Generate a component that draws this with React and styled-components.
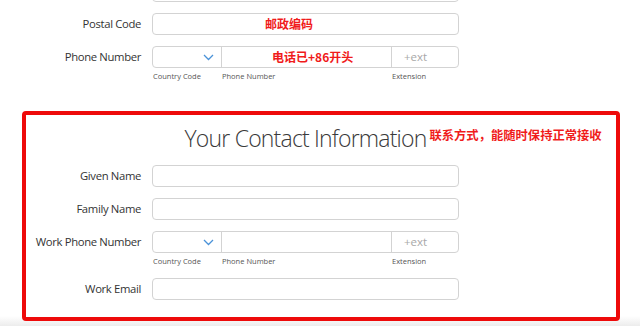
import styled, { createGlobalStyle } from 'styled-components';

const GlobalStyle = createGlobalStyle`
  html, body {
    margin: 0;
    padding: 0;
  }
  body {
    background: linear-gradient(#ffffff 316px, #ececec 326px);
    min-height: 326px;
    overflow: hidden;
    font-family: "Open Sans", "Noto Sans", sans-serif;
    color: #333333;
  }
`

const Chevron = () => (
  <svg width='11' height='7' viewBox='0 0 11 7'>
    <path d='M1 1 L5.5 5.5 L10 1' fill='none' stroke='#4a92d8' strokeWidth='1.3' />
  </svg>
)

const PhoneRow = ({ label, labelWidth, note }) => (
  <Row $labelWidth={labelWidth}>
    <Label>{label}</Label>
    <div>
      <PhoneGroup>
        <SelectBox>
          <Chevron />
        </SelectBox>
        <PhoneInput>
          {note && <Note $left={50}>{note}</Note>}
        </PhoneInput>
        <ExtInput>+ext</ExtInput>
      </PhoneGroup>
      <SubLabels>
        <span>Country Code</span>
        <span>Phone Number</span>
        <span>Extension</span>
      </SubLabels>
    </div>
  </Row>
)

const TextRow = ({ label, labelWidth, note }) => (
  <Row $labelWidth={labelWidth}>
    <Label>{label}</Label>
    <Input>
      {note && <Note $left={112}>{note}</Note>}
    </Input>
  </Row>
)

const App = () => {
  return (
    <>
      <GlobalStyle />
      <Page>
        <TopForm>
          <TextRow label='' labelWidth={141} />
          <TextRow label='Postal Code' labelWidth={141} note='邮政编码' />
          <PhoneRow label='Phone Number' labelWidth={141} note='电话已+86开头' />
        </TopForm>
        <ContactBox>
          <HeadingRow>
            <Heading>
              Your Contact Information
              <HeadingNote>联系方式，能随时保持正常接收</HeadingNote>
            </Heading>
          </HeadingRow>
          <TextRow label='Given Name' labelWidth={115} />
          <TextRow label='Family Name' labelWidth={115} />
          <PhoneRow label='Work Phone Number' labelWidth={115} />
          <TextRow label='Work Email' labelWidth={115} />
        </ContactBox>
      </Page>
    </>
  )
}

export default App

const Page = styled.div`
  width: 640px;
  height: 326px;
  overflow: hidden;
`

const TopForm = styled.div`
  margin-top: -20px;
  display: flex;
  flex-direction: column;
  gap: 11px;
`

const Row = styled.div`
  display: grid;
  grid-template-columns: ${props => props.$labelWidth}px 307px;
  column-gap: 11px;
  align-items: start;
`

const Label = styled.div`
  height: 22px;
  line-height: 22px;
  text-align: right;
  font-size: 11.3px;
  letter-spacing: -0.35px;
  color: #333333;
  white-space: nowrap;
`

const Input = styled.div`
  position: relative;
  box-sizing: border-box;
  height: 22px;
  border: 1px solid #d3d3d3;
  border-radius: 4px;
  background: #ffffff;
`

const Note = styled.span`
  position: absolute;
  left: ${props => props.$left}px;
  top: 0;
  line-height: 20px;
  font-family: "Noto Sans CJK SC", sans-serif;
  font-weight: 700;
  font-size: 12px;
  color: #f01b1b;
  white-space: nowrap;
`

const PhoneGroup = styled.div`
  display: grid;
  grid-template-columns: 69px 170px 68px;
  height: 22px;
  box-sizing: border-box;
  border: 1px solid #d3d3d3;
  border-radius: 4px;
  background: #ffffff;
`

const SelectBox = styled.div`
  display: flex;
  align-items: center;
  justify-content: flex-end;
  padding-right: 7px;
  border-right: 1px solid #d3d3d3;
`

const PhoneInput = styled.div`
  position: relative;
  border-right: 1px solid #d3d3d3;
`

const ExtInput = styled.div`
  padding-left: 12px;
  line-height: 20px;
  font-size: 11.5px;
  color: #a8a8a8;
`

const SubLabels = styled.div`
  display: grid;
  grid-template-columns: 69px 170px 68px;
  padding-top: 3px;
  height: 11px;
  font-size: 7.5px;
  line-height: 11px;
  color: #555555;
  & span {
    padding-left: 1px;
  }
`

const ContactBox = styled.div`
  margin: 29px 0 0 22px;
  width: 598px;
  height: 210px;
  box-sizing: border-box;
  border: 4px solid #ee0a0a;
  border-radius: 4px;
  background: #ffffff;
  padding-top: 6px;
  display: flex;
  flex-direction: column;
  gap: 11px;
`

const HeadingRow = styled.div`
  display: grid;
  grid-template-columns: 115px 307px;
  column-gap: 11px;
  height: 33px;
`

const Heading = styled.h2`
  grid-column: 2;
  position: relative;
  justify-self: center;
  margin: 0;
  font-weight: 300;
  font-size: 23px;
  line-height: 34px;
  color: #3a3a3a;
  white-space: nowrap;
  letter-spacing: -0.8px;
`

const HeadingNote = styled.span`
  position: absolute;
  left: 100%;
  top: 0;
  margin-left: 3px;
  line-height: 28px;
  font-family: "Noto Sans CJK SC", sans-serif;
  font-weight: 700;
  font-size: 12.3px;
  letter-spacing: 0;
  color: #f01b1b;
`
